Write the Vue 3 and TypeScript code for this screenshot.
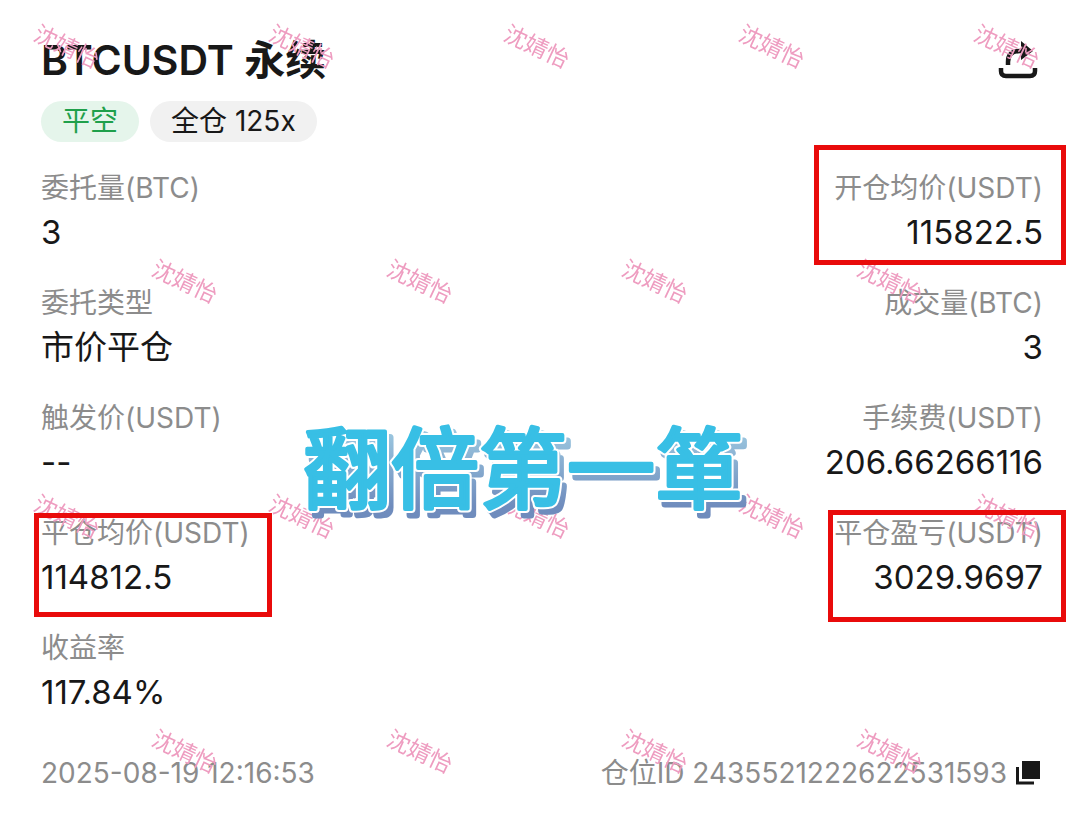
<script setup lang="ts">
interface Field {
  label: string
  value: string
  mark?: string
}

const rows: Field[][] = [
  [
    { label: '委托量(BTC)', value: '3' },
    { label: '开仓均价(USDT)', value: '115822.5', mark: 'mark-open' },
  ],
  [
    { label: '委托类型', value: '市价平仓' },
    { label: '成交量(BTC)', value: '3' },
  ],
  [
    { label: '触发价(USDT)', value: '--' },
    { label: '手续费(USDT)', value: '206.66266116' },
  ],
  [
    { label: '平仓均价(USDT)', value: '114812.5', mark: 'mark-close' },
    { label: '平仓盈亏(USDT)', value: '3029.9697', mark: 'mark-profit' },
  ],
  [{ label: '收益率', value: '117.84%' }],
]
</script>

<template>
  <main class="page">
    <header class="head">
      <h1>BTCUSDT 永续</h1>
      <button class="icon-btn" type="button" aria-label="分享">
        <svg width="40" height="40" viewBox="0 0 40 40">
          <path d="M3 28v3q0 5 5 5h24q5 0 5-5v-3" fill="none" stroke="#181818" stroke-width="4.5" />
          <path d="M10 25v-3q0-11 12-11h4" fill="none" stroke="#181818" stroke-width="4.5" />
          <path d="M23 1l12 10-12 9z" fill="#181818" />
        </svg>
      </button>
    </header>

    <div class="tags">
      <span class="tag tag-green">平空</span>
      <span class="tag">全仓 125x</span>
    </div>

    <section class="rows">
      <dl v-for="(row, i) in rows" :key="i" class="row">
        <div v-for="field in row" :key="field.label" class="field" :class="field.mark">
          <dt>{{ field.label }}</dt>
          <dd>{{ field.value }}</dd>
        </div>
      </dl>
    </section>

    <footer class="foot">
      <time>2025-08-19 12:16:53</time>
      <div class="position">
        <span>仓位ID 2435521222622531593</span>
        <button class="icon-btn copy" type="button" aria-label="复制">
          <svg width="24" height="24" viewBox="0 0 24 24">
            <path d="M6 0h18v18H6z" fill="#181818" />
            <path d="M1.500 6v16H18" fill="none" stroke="#181818" stroke-width="3" />
          </svg>
        </button>
      </div>
    </footer>

    <svg class="watermark" width="100%" height="100%" aria-hidden="true">
      <defs>
        <pattern id="wm" width="235" height="470" patternUnits="userSpaceOnUse">
          <text transform="translate(67 46) rotate(25)" text-anchor="middle" y="9">沈婧怡</text>
          <text transform="translate(185 281) rotate(25)" text-anchor="middle" y="9">沈婧怡</text>
        </pattern>
      </defs>
      <rect width="100%" height="100%" fill="url(#wm)" />
    </svg>

    <svg class="sticker" width="460" height="110" viewBox="0 0 460 110">
      <defs>
        <linearGradient id="shade" x1="0" y1="0" x2="0" y2="1">
          <stop offset="0.2" stop-color="#9cc8e0" />
          <stop offset="0.8" stop-color="#6f8cbd" />
        </linearGradient>
        <text id="slogan" x="10" y="86">翻倍第一箪</text>
      </defs>
      <use href="#slogan" x="5" y="6" class="shade" />
      <use href="#slogan" class="outline" />
      <use href="#slogan" class="face" />
    </svg>
  </main>
</template>

<style scoped>
.page {
  position: relative;
  box-sizing: border-box;
  min-height: 826px;
  padding: 32px 41px;
  overflow: hidden;
  background: #fff;
  color: #181818;
  font-family: Inter, "Noto Sans CJK SC", sans-serif;
}
.head {
  display: flex;
  justify-content: space-between;
  align-items: center;
}
h1 {
  margin: 0;
  font-size: 41px;
  line-height: 56px;
  font-weight: 600;
}
.icon-btn {
  display: flex;
  padding: 0 5px;
  border: 0;
  background: none;
}
.copy {
  padding: 0 3px;
}
.tags {
  display: flex;
  gap: 11px;
  margin-top: 13px;
}
.tag {
  padding: 0 21px;
  border-radius: 21px;
  background: #f1f1f1;
  font-size: 28px;
  line-height: 41px;
}
.tag-green {
  background: #e5f5eb;
  color: #1fa04b;
}
.rows {
  display: grid;
  gap: 27px;
  margin-top: 24px;
}
.row {
  display: flex;
  justify-content: space-between;
  margin: 0;
}
.field {
  position: relative;
}
.field + .field {
  text-align: right;
}
dt {
  color: #8c8c8c;
  font-size: 28px;
  line-height: 44px;
}
dd {
  margin: 0;
  font-size: 33px;
  line-height: 44px;
}
.mark-open::after,
.mark-close::after,
.mark-profit::after {
  content: "";
  position: absolute;
  z-index: 2;
  border: 5px solid #e90b0b;
}
.mark-open::after {
  inset: -21px -23px -11px -20px;
}
.mark-close::after {
  inset: 2px -22px -18px -7px;
}
.mark-profit::after {
  inset: -1px -23px -23px -6px;
}
.foot {
  display: flex;
  justify-content: space-between;
  margin-top: 37px;
  color: #8c8c8c;
  font-size: 28px;
  line-height: 44px;
}
.position {
  display: flex;
  align-items: center;
  gap: 6px;
}
.watermark {
  position: absolute;
  inset: 0;
  z-index: 1;
  pointer-events: none;
}
.watermark text {
  fill: #ee9cc0;
  font-family: "Noto Sans CJK SC", sans-serif;
  font-size: 23px;
  font-weight: 400;
}
.sticker {
  position: absolute;
  z-index: 3;
  top: 415px;
  left: calc(50% - 249px);
  font-family: "Noto Sans CJK SC", sans-serif;
  font-size: 88px;
  font-weight: 400;
  stroke-linejoin: round;
  pointer-events: none;
}
.shade {
  fill: url(#shade);
  stroke: url(#shade);
  stroke-width: 7px;
}
.outline {
  fill: #fff;
  stroke: #fff;
  stroke-width: 8px;
}
.face {
  fill: #38bfe5;
  stroke: #38bfe5;
  stroke-width: 4px;
}
</style>
